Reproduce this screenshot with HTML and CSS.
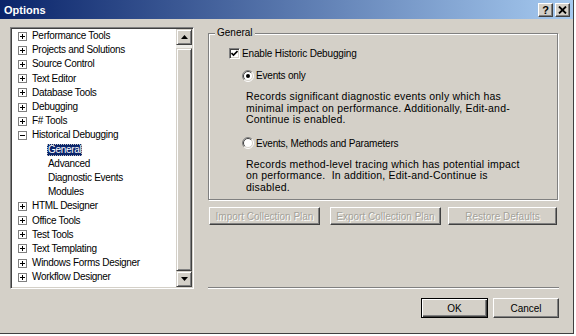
FILE: index.html
```html
<!DOCTYPE html>
<html>
<head>
<meta charset="utf-8">
<title>Options</title>
<link rel="stylesheet" href="styles.css">
</head>
<body>
<div class="window">
  <div class="titlebar">
    <span class="title">Options</span>
    <div class="tbtns">
      <span class="tbtn help">?</span>
      <span class="tbtn"><svg width="9" height="8" viewBox="0 0 9 8"><path d="M1 0.5 L8 7.5 M8 0.5 L1 7.5" stroke="#000" stroke-width="1.8" fill="none"/></svg></span>
    </div>
  </div>
  <div class="main">
    <div class="tree">
      <ul class="tree-list">
        <li class="node"><svg class="exp" width="9" height="9" viewBox="0 0 9 9"><rect x="0.5" y="0.5" width="8" height="8" fill="#fff" stroke="#808080"/><path d="M2 4.5 H7 M4.5 2 V7" stroke="#000"/></svg><span class="label">Performance Tools</span></li>
        <li class="node"><svg class="exp" width="9" height="9" viewBox="0 0 9 9"><rect x="0.5" y="0.5" width="8" height="8" fill="#fff" stroke="#808080"/><path d="M2 4.5 H7 M4.5 2 V7" stroke="#000"/></svg><span class="label">Projects and Solutions</span></li>
        <li class="node"><svg class="exp" width="9" height="9" viewBox="0 0 9 9"><rect x="0.5" y="0.5" width="8" height="8" fill="#fff" stroke="#808080"/><path d="M2 4.5 H7 M4.5 2 V7" stroke="#000"/></svg><span class="label">Source Control</span></li>
        <li class="node"><svg class="exp" width="9" height="9" viewBox="0 0 9 9"><rect x="0.5" y="0.5" width="8" height="8" fill="#fff" stroke="#808080"/><path d="M2 4.5 H7 M4.5 2 V7" stroke="#000"/></svg><span class="label">Text Editor</span></li>
        <li class="node"><svg class="exp" width="9" height="9" viewBox="0 0 9 9"><rect x="0.5" y="0.5" width="8" height="8" fill="#fff" stroke="#808080"/><path d="M2 4.5 H7 M4.5 2 V7" stroke="#000"/></svg><span class="label">Database Tools</span></li>
        <li class="node"><svg class="exp" width="9" height="9" viewBox="0 0 9 9"><rect x="0.5" y="0.5" width="8" height="8" fill="#fff" stroke="#808080"/><path d="M2 4.5 H7 M4.5 2 V7" stroke="#000"/></svg><span class="label">Debugging</span></li>
        <li class="node"><svg class="exp" width="9" height="9" viewBox="0 0 9 9"><rect x="0.5" y="0.5" width="8" height="8" fill="#fff" stroke="#808080"/><path d="M2 4.5 H7 M4.5 2 V7" stroke="#000"/></svg><span class="label">F# Tools</span></li>
        <li class="node"><svg class="exp" width="9" height="9" viewBox="0 0 9 9"><rect x="0.5" y="0.5" width="8" height="8" fill="#fff" stroke="#808080"/><path d="M2 4.5 H7" stroke="#000"/></svg><span class="label">Historical Debugging</span></li>
        <li class="child"><span class="label sel">General</span></li>
        <li class="child"><span class="label">Advanced</span></li>
        <li class="child"><span class="label">Diagnostic Events</span></li>
        <li class="child"><span class="label">Modules</span></li>
        <li class="node"><svg class="exp" width="9" height="9" viewBox="0 0 9 9"><rect x="0.5" y="0.5" width="8" height="8" fill="#fff" stroke="#808080"/><path d="M2 4.5 H7 M4.5 2 V7" stroke="#000"/></svg><span class="label">HTML Designer</span></li>
        <li class="node"><svg class="exp" width="9" height="9" viewBox="0 0 9 9"><rect x="0.5" y="0.5" width="8" height="8" fill="#fff" stroke="#808080"/><path d="M2 4.5 H7 M4.5 2 V7" stroke="#000"/></svg><span class="label">Office Tools</span></li>
        <li class="node"><svg class="exp" width="9" height="9" viewBox="0 0 9 9"><rect x="0.5" y="0.5" width="8" height="8" fill="#fff" stroke="#808080"/><path d="M2 4.5 H7 M4.5 2 V7" stroke="#000"/></svg><span class="label">Test Tools</span></li>
        <li class="node"><svg class="exp" width="9" height="9" viewBox="0 0 9 9"><rect x="0.5" y="0.5" width="8" height="8" fill="#fff" stroke="#808080"/><path d="M2 4.5 H7 M4.5 2 V7" stroke="#000"/></svg><span class="label">Text Templating</span></li>
        <li class="node"><svg class="exp" width="9" height="9" viewBox="0 0 9 9"><rect x="0.5" y="0.5" width="8" height="8" fill="#fff" stroke="#808080"/><path d="M2 4.5 H7 M4.5 2 V7" stroke="#000"/></svg><span class="label">Windows Forms Designer</span></li>
        <li class="node"><svg class="exp" width="9" height="9" viewBox="0 0 9 9"><rect x="0.5" y="0.5" width="8" height="8" fill="#fff" stroke="#808080"/><path d="M2 4.5 H7 M4.5 2 V7" stroke="#000"/></svg><span class="label">Workflow Designer</span></li>
      </ul>
      <div class="vscroll">
        <div class="sbtn"><svg width="7" height="4" viewBox="0 0 7 4"><path d="M3.5 0 L7 4 L0 4 Z" fill="#000"/></svg></div>
        <div class="track"><div class="thumb"></div></div>
        <div class="sbtn"><svg width="7" height="4" viewBox="0 0 7 4"><path d="M0 0 L7 0 L3.5 4 Z" fill="#000"/></svg></div>
      </div>
    </div>
    <div class="right">
      <fieldset class="group">
        <legend>General</legend>
        <div class="check-row">
          <span class="checkbox"><svg width="7" height="7" viewBox="0 0 7 7"><path d="M0.5 3 L2.5 5 L6.5 1" stroke="#000" stroke-width="1.6" fill="none"/></svg></span>
          <span>Enable Historic Debugging</span>
        </div>
        <div class="radio-row">
          <svg width="12" height="12" viewBox="0 0 12 12"><circle cx="6" cy="6" r="5" fill="#fff"/><path d="M2.1 9.9 A5.5 5.5 0 0 1 9.9 2.1" stroke="#808080" fill="none"/><path d="M9.9 2.1 A5.5 5.5 0 0 1 2.1 9.9" stroke="#fff" fill="none"/><path d="M2.8 9.2 A4.5 4.5 0 0 1 9.2 2.8" stroke="#404040" fill="none"/><path d="M9.2 2.8 A4.5 4.5 0 0 1 2.8 9.2" stroke="#d4d0c8" fill="none"/><circle cx="6" cy="6" r="2" fill="#000"/></svg>
          <span>Events only</span>
        </div>
        <p class="desc">Records significant diagnostic events only which has<br>minimal impact on performance. Additionally, Edit-and-<br>Continue is enabled.</p>
        <div class="radio-row second">
          <svg width="12" height="12" viewBox="0 0 12 12"><circle cx="6" cy="6" r="5" fill="#fff"/><path d="M2.1 9.9 A5.5 5.5 0 0 1 9.9 2.1" stroke="#808080" fill="none"/><path d="M9.9 2.1 A5.5 5.5 0 0 1 2.1 9.9" stroke="#fff" fill="none"/><path d="M2.8 9.2 A4.5 4.5 0 0 1 9.2 2.8" stroke="#404040" fill="none"/><path d="M9.2 2.8 A4.5 4.5 0 0 1 2.8 9.2" stroke="#d4d0c8" fill="none"/></svg>
          <span>Events, Methods and Parameters</span>
        </div>
        <p class="desc second">Records method-level tracing which has potential impact<br>on performance.&nbsp; In addition, Edit-and-Continue is<br>disabled.</p>
      </fieldset>
      <div class="actions">
        <button class="btn disabled import">Import Collection Plan</button>
        <button class="btn disabled export">Export Collection Plan</button>
        <button class="btn disabled restore">Restore Defaults</button>
      </div>
      <div class="sep"></div>
      <div class="footer">
        <button class="btn default">OK</button>
        <button class="btn cancel">Cancel</button>
      </div>
    </div>
  </div>
</div>
</body>
</html>
```

FILE: styles.css
```css
* { box-sizing: border-box; }
body {
  margin: 0;
  background: #fff;
  font-family: "Liberation Sans", Arial, sans-serif;
  font-size: 10px;
  color: #000;
}
.window {
  width: 574px;
  height: 334px;
  background: #d4d0c8;
  border-right: 1px solid #404040;
  border-bottom: 1px solid #404040;
  display: flex;
  flex-direction: column;
}
.titlebar {
  height: 19px;
  flex: none;
  background: linear-gradient(to right, #0a246a, #a6caf0);
  display: flex;
  align-items: center;
  justify-content: space-between;
  padding: 0 3px 0 4px;
}
.title {
  color: #fff;
  font-weight: bold;
  font-size: 11px;
}
.tbtns { display: flex; gap: 2px; }
.tbtn {
  width: 15px;
  height: 14px;
  background: #d4d0c8;
  border: 1px solid;
  border-color: #fff #404040 #404040 #fff;
  box-shadow: inset -1px -1px #808080;
  display: flex;
  align-items: center;
  justify-content: center;
  font-weight: bold;
  font-size: 11px;
  line-height: 12px;
}
.main {
  display: flex;
  flex: 1;
  padding: 8px 0 0 10px;
}
.tree {
  width: 184px;
  height: 262px;
  flex: none;
  background: #fff;
  border: 1px solid;
  border-color: #808080 #fff #fff #808080;
  box-shadow: inset 1px 1px #404040, inset -1px -1px #d4d0c8;
  padding: 1px;
  display: flex;
}
.tree-list {
  flex: 1;
  list-style: none;
  margin: 0;
  padding: 0 0 0 6px;
  overflow: hidden;
  letter-spacing: -0.3px;
}
.tree-list li {
  height: 14.2px;
  display: flex;
  align-items: center;
  white-space: nowrap;
}
.exp { flex: none; margin-right: 4px; }
.label { line-height: 12px; padding: 0 1px; }
.child { padding-left: 29px; }
.sel {
  background: #0a246a;
  color: #fff;
  outline: 1px dotted #c0c0c0;
  outline-offset: -1px;
}
.vscroll {
  width: 16px;
  flex: none;
  display: flex;
  flex-direction: column;
}
.sbtn, .thumb {
  background: #d4d0c8;
  border: 1px solid;
  border-color: #d4d0c8 #404040 #404040 #d4d0c8;
  box-shadow: inset 1px 1px #fff, inset -1px -1px #808080;
}
.sbtn {
  height: 16px;
  flex: none;
  display: flex;
  align-items: center;
  justify-content: center;
}
.track {
  flex: 1;
  background: #eeede9;
  padding-top: 3px;
  display: flex;
}
.thumb { flex: 1; }
.right {
  margin-left: 14px;
  width: 351px;
  display: flex;
  flex-direction: column;
}
.group {
  margin: 0;
  min-inline-size: 0;
  width: 350px;
  padding: 8px 0 6px 0;
  border: 1px solid #808080;
  box-shadow: 1px 1px 0 #fff, inset 1px 1px 0 #fff;
}
.group legend {
  margin-left: 6px;
  padding: 0 2px;
  line-height: 12px;
  background: #d4d0c8;
}
.check-row {
  display: flex;
  align-items: center;
  height: 13px;
  margin-left: 20px;
  gap: 2px;
  letter-spacing: -0.15px;
}
.checkbox {
  width: 11px;
  height: 11px;
  background: #fff;
  border: 1px solid;
  border-color: #808080 #fff #fff #808080;
  box-shadow: inset 1px 1px #404040, inset -1px -1px #d4d0c8;
  display: flex;
  align-items: center;
  justify-content: center;
}
.radio-row {
  display: flex;
  align-items: center;
  height: 13px;
  margin: 9px 0 0 33px;
  gap: 2px;
  letter-spacing: -0.2px;
}
.radio-row.second { margin-top: 11px; }
.desc {
  margin: 9px 0 0 37px;
  font-size: 10.5px;
  letter-spacing: 0.2px;
  line-height: 11.5px;
}
.actions {
  display: flex;
  margin-top: 7px;
}
.btn {
  font-family: inherit;
  font-size: 10px;
  height: 18px;
  padding: 0;
  background: #d4d0c8;
  color: #000;
  border: 1px solid;
  border-color: #fff #404040 #404040 #fff;
  box-shadow: inset -1px -1px #808080;
}
.btn.disabled {
  color: #a4a29a;
  text-shadow: 1px 1px #fff;
}
.import { width: 111px; margin-left: 1px; }
.export { width: 111px; margin-left: 10px; }
.restore { width: 109px; margin-left: 7px; }
.sep {
  margin-top: 62px;
  height: 2px;
  border-top: 1px solid #808080;
  border-bottom: 1px solid #fff;
}
.footer {
  display: flex;
  justify-content: flex-end;
  gap: 5px;
  margin-top: 9px;
}
.footer .btn { height: 20px; width: 66px; }
.btn.default {
  width: 67px;
  border: 1px solid #000;
  box-shadow: inset 1px 1px #fff, inset -1px -1px #404040, inset -2px -2px #808080;
}
```
